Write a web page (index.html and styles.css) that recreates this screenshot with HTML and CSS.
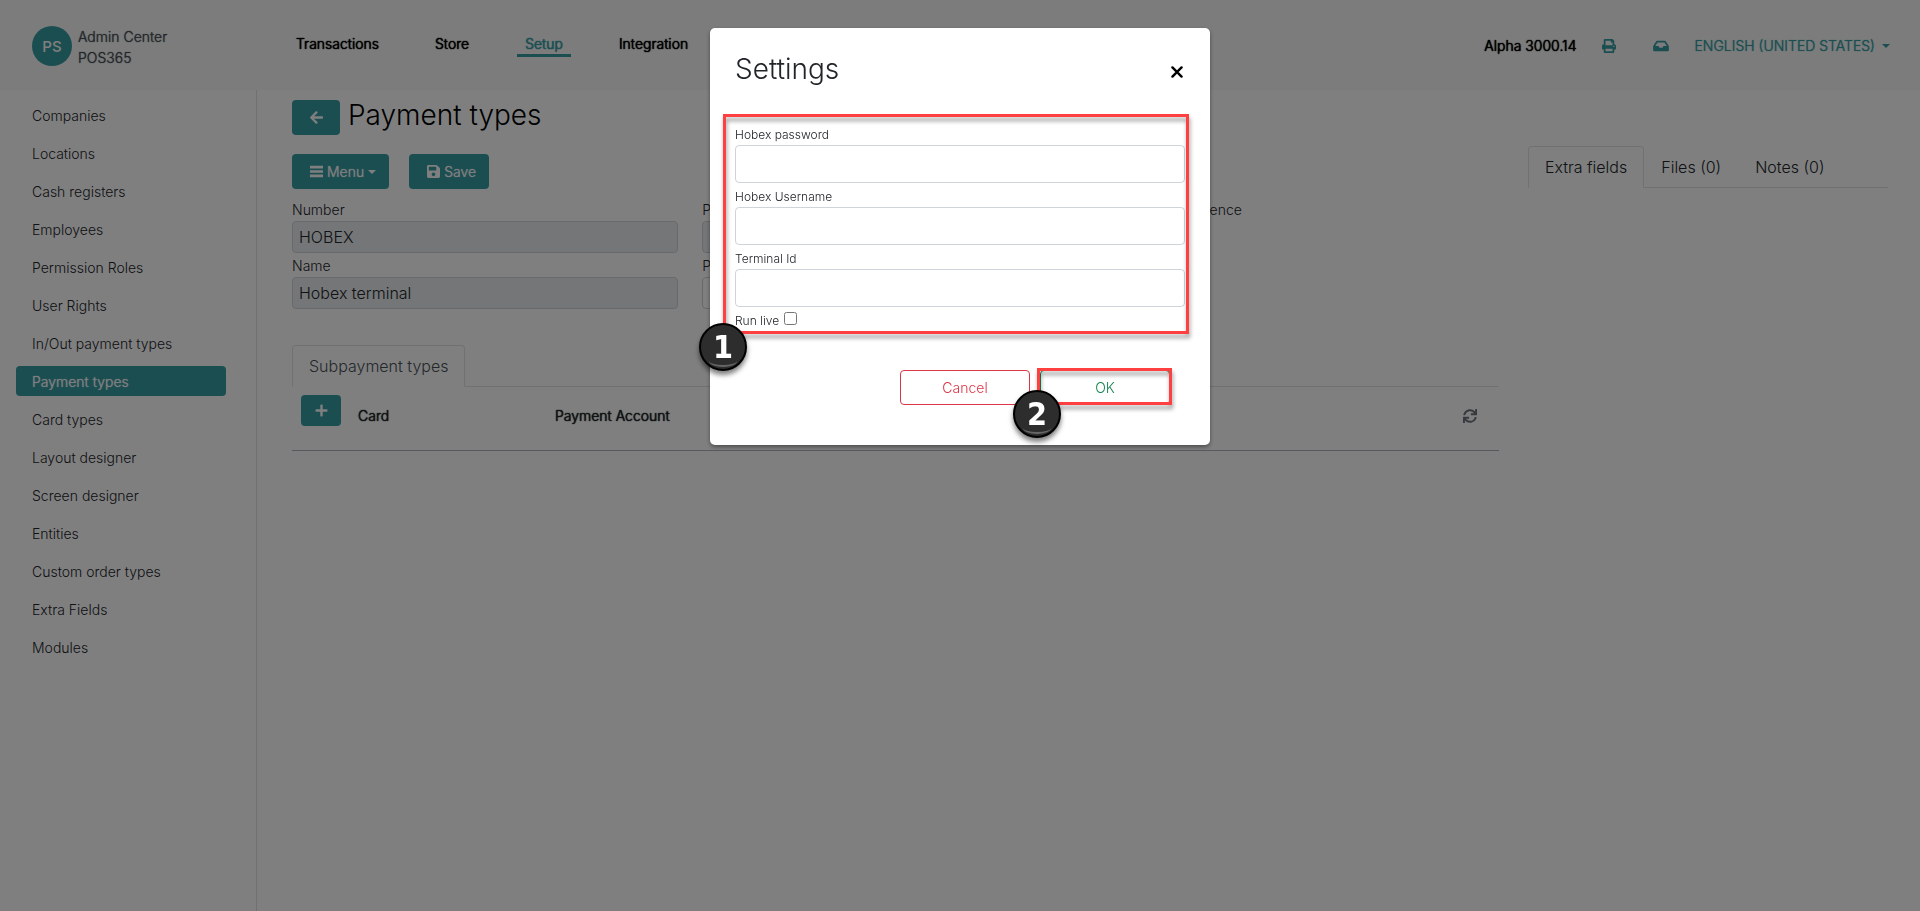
FILE: index.html
```html
<!DOCTYPE html>
<html lang="en">
<head>
<meta charset="utf-8">
<title>Payment types</title>
<link rel="stylesheet" href="styles.css">
</head>
<body>
<div class="app">
  <header class="topbar">
    <a class="brand" href="#">
      <span class="brand-logo">PS</span>
      <span class="brand-name">Admin Center<br>POS365</span>
    </a>
    <nav class="mainnav">
      <a href="#">Transactions</a>
      <a href="#">Store</a>
      <a href="#" class="current">Setup</a>
      <a href="#">Integration</a>
    </nav>
    <div class="tools">
      <span class="company">Alpha 3000.14</span>
      <button class="tool" type="button" aria-label="Print">
        <svg width="14" height="14" viewBox="0 0 512 512"><path d="M448 192V77.250c0-8.500-3.400-16.600-9.400-22.600L393.400 9.400c-6-6-14.100-9.400-22.600-9.400H96C78.300 0 64 14.300 64 32v160c-35.300 0-64 28.700-64 64v112c0 8.800 7.200 16 16 16h48v96c0 17.700 14.300 32 32 32h320c17.700 0 32-14.300 32-32v-96h48c8.800 0 16-7.200 16-16V256c0-35.300-28.700-64-64-64zm-64 256H128v-96h256v96zm0-224H128V64h192v48c0 8.800 7.200 16 16 16h48v96zm48 72c-13.300 0-24-10.700-24-24s10.700-24 24-24 24 10.700 24 24-10.700 24-24 24z"/></svg>
      </button>
      <button class="tool" type="button" aria-label="Inbox">
        <svg width="16" height="14" viewBox="0 0 576 512"><path d="M567.900 243.900L462.300 85.400A48 48 0 0 0 422.400 64H153.600a48 48 0 0 0-39.900 21.400L8.100 243.900A48 48 0 0 0 0 270.500V400c0 26.500 21.500 48 48 48h480c26.500 0 48-21.500 48-48V270.500a48 48 0 0 0-8.100-26.600zM162.300 128h251.500l85.300 128H376l-32 64H232l-32-64H76.900l85.400-128z"/></svg>
      </button>
      <button class="language caret" type="button">ENGLISH (UNITED STATES)</button>
    </div>
  </header>

  <div class="body">
    <nav class="sidebar">
      <a href="#">Companies</a>
      <a href="#">Locations</a>
      <a href="#">Cash registers</a>
      <a href="#">Employees</a>
      <a href="#">Permission Roles</a>
      <a href="#">User Rights</a>
      <a href="#">In/Out payment types</a>
      <a href="#" class="current">Payment types</a>
      <a href="#">Card types</a>
      <a href="#">Layout designer</a>
      <a href="#">Screen designer</a>
      <a href="#">Entities</a>
      <a href="#">Custom order types</a>
      <a href="#">Extra Fields</a>
      <a href="#">Modules</a>
    </nav>

    <main class="content">
      <section class="details">
        <div class="heading">
          <button class="btn btn-back" type="button" aria-label="Back">
            <svg width="13" height="15" viewBox="0 0 448 512"><path d="M257.500 445.100l-22.200 22.200c-9.400 9.400-24.600 9.400-33.900 0L7 273c-9.400-9.400-9.400-24.600 0-33.900L201.400 44.700c9.400-9.400 24.600-9.400 33.900 0l22.200 22.200c9.500 9.500 9.300 25-.4 34.300L136.600 216H424c13.300 0 24 10.700 24 24v32c0 13.300-10.700 24-24 24H136.600l120.500 114.800c9.800 9.300 10 24.800.4 34.300z"/></svg>
          </button>
          <h1>Payment types</h1>
        </div>
        <div class="actions">
          <button class="btn caret" type="button">
            <svg width="13" height="13" viewBox="0 0 13 13"><path d="M0 .8h13v2.600H0zM0 5.200h13v2.600H0zM0 9.600h13v2.600H0z"/></svg>
            Menu</button>
          <button class="btn" type="button">
            <svg width="13" height="15" viewBox="0 0 448 512"><path d="M433.900 129.900l-83.800-83.800A48 48 0 0 0 316.100 32H48C21.500 32 0 53.500 0 80v352c0 26.500 21.500 48 48 48h352c26.500 0 48-21.500 48-48V163.900a48 48 0 0 0-14.100-34zM224 416c-35.300 0-64-28.700-64-64s28.700-64 64-64 64 28.700 64 64-28.700 64-64 64zm96-304.500V212c0 6.600-5.400 12-12 12H76c-6.600 0-12-5.400-12-12V108c0-6.600 5.400-12 12-12h228.500c3.200 0 6.200 1.300 8.500 3.500l3.500 3.500A12 12 0 0 1 320 111.500z"/></svg>
            Save</button>
        </div>
        <div class="fields">
          <div class="field">
            <label for="number">Number</label>
            <input id="number" value="HOBEX" readonly>
          </div>
          <div class="field">
            <label for="type">Payment kind</label>
            <input id="type" value="Terminal" readonly>
          </div>
          <div class="check">
            <input id="reference" type="checkbox">
            <label for="reference">Require reference</label>
          </div>
          <div class="field">
            <label for="name">Name</label>
            <input id="name" value="Hobex terminal" readonly>
          </div>
          <div class="field">
            <label for="pin">PIN</label>
            <input id="pin">
          </div>
        </div>
        <div class="tabs tabs-sub">
          <button class="tab active" type="button">Subpayment types</button>
        </div>
        <table class="grid">
          <thead>
            <tr>
              <th class="col-add"><button class="btn btn-add" type="button" aria-label="Add">
                <svg width="13" height="13" viewBox="0 0 13 13"><path d="M5.300 1.200q0-.7.700-.7h1q.7 0 .7.700v4.100h4.100q.7 0 .7.700v1q0 .7-.7.700H7.700v4.100q0 .7-.7.700H6q-.7 0-.7-.7V7.700H1.200q-.7 0-.7-.7V6q0-.7.700-.7h4.100z"/></svg>
              </button></th>
              <th class="col-card">Card</th>
              <th>Payment Account</th>
              <th class="col-refresh"><button class="refresh" type="button" aria-label="Refresh">
                <svg width="14" height="14" viewBox="0 0 512 512"><path d="M440.600 12.600l4 82.800A247.200 247.200 0 0 0 255.800 8C134.700 8 33.900 94.900 12.300 209.800A12 12 0 0 0 24.100 224h49a12 12 0 0 0 11.700-9.300 175.900 175.900 0 0 1 317-56.900l-101.500-4.900a12 12 0 0 0-12.600 12v47.400a12 12 0 0 0 12 12H500a12 12 0 0 0 12-12V12a12 12 0 0 0-12-12h-47.400a12 12 0 0 0-12 12.600zM255.800 432a175.600 175.600 0 0 1-146-77.800l101.800 4.900a12 12 0 0 0 12.600-12v-47.400a12 12 0 0 0-12-12H12a12 12 0 0 0-12 12V500a12 12 0 0 0 12 12h47.400a12 12 0 0 0 12-12.600l-4.200-82.600A247.200 247.200 0 0 0 255.800 504c121.100 0 221.900-86.900 243.500-201.800a12 12 0 0 0-11.800-14.200h-49a12 12 0 0 0-11.700 9.300A175.900 175.900 0 0 1 255.800 432z"/></svg>
              </button></th>
            </tr>
          </thead>
        </table>
      </section>

      <aside class="extras">
        <div class="tabs">
          <button class="tab active" type="button">Extra fields</button>
          <button class="tab" type="button">Files (0)</button>
          <button class="tab" type="button">Notes (0)</button>
        </div>
      </aside>
    </main>
  </div>
</div>

<div class="backdrop">
  <div class="modal" role="dialog" aria-labelledby="modal-title">
    <div class="modal-head">
      <h2 id="modal-title">Settings</h2>
      <button class="close" type="button" aria-label="Close">
        <svg width="12" height="12" viewBox="0 0 10 10"><path d="M1.200 1.200l7.600 7.600M8.800 1.200l-7.600 7.600"/></svg>
      </button>
    </div>
    <form class="modal-form">
      <label for="password">Hobex password</label>
      <input id="password" type="text">
      <label for="username">Hobex Username</label>
      <input id="username" type="text">
      <label for="terminal">Terminal Id</label>
      <input id="terminal" type="text">
      <div class="live">
        <label for="live">Run live</label>
        <input id="live" type="checkbox">
      </div>
      <span class="mark mark-form"></span>
      <span class="step step-form">1</span>
    </form>
    <div class="modal-foot">
      <button class="outline cancel" type="button">Cancel</button>
      <div class="confirm">
        <button class="outline ok" type="button">OK</button>
        <span class="mark mark-ok"></span>
        <span class="step step-ok">2</span>
      </div>
    </div>
  </div>
</div>
</body>
</html>
```

FILE: styles.css
```css
* {
  box-sizing: border-box;
}

body {
  margin: 0;
  background: #fff;
  color: #212529;
  font: 300 14px/21px Inter, "Liberation Sans", sans-serif;
}

a {
  color: inherit;
  text-decoration: none;
}

button,
input {
  font: inherit;
  color: inherit;
}

button {
  border: 0;
  padding: 0;
  background: none;
}

svg {
  display: block;
  flex: none;
  fill: currentColor;
}

h1,
h2 {
  margin: 0;
  font-size: 28px;
  line-height: 34px;
  font-weight: 300;
}

.app {
  display: flex;
  flex-direction: column;
  min-height: 100vh;
}

/* Top bar */
.topbar {
  display: flex;
  align-items: center;
  height: 90px;
  padding: 2px 30px 0 32px;
  background: #f8f8f8;
}

.brand {
  display: flex;
  align-items: center;
  gap: 6px;
  width: 256px;
  color: #495057;
}

.brand-name {
  padding-top: 2px;
  text-shadow: 0 0 1px currentColor;
}

.brand-logo {
  display: grid;
  place-items: center;
  width: 40px;
  height: 40px;
  border-radius: 50%;
  background: #369ca3;
  color: #fff;
  font-size: 15px;
  font-weight: 500;
}

.mainnav {
  display: flex;
  gap: 40px;
  margin-bottom: 2px;
  color: #000;
}

.mainnav,
.company,
.grid {
  text-shadow: 0 0 1px currentColor, 0 0 1px currentColor;
}

.mainnav a {
  padding: 0 8px;
  border-bottom: 3px solid transparent;
}

.mainnav .current {
  color: #369ca3;
  border-color: #369ca3;
}

.tools {
  display: flex;
  align-items: center;
  margin-bottom: 1px;
  margin-left: auto;
  color: #369ca3;
}

.company {
  color: #000;
}

.tool {
  margin-left: 26px;
}

.tool + .tool {
  margin-left: 37px;
}

.language {
  margin-left: 25px;
  text-shadow: 0 0 1px currentColor;
}

.caret {
  display: flex;
  align-items: center;
}

.caret::after {
  content: "";
  border: 4px solid transparent;
  border-top-color: currentColor;
  border-bottom: 0;
}

.language::after {
  margin-left: 7px;
}

/* Sidebar */
.body {
  display: flex;
  flex: 1;
}

.sidebar {
  display: flex;
  flex-direction: column;
  gap: 8px;
  width: 257px;
  padding: 10px 30px 0 16px;
  border-right: 1px solid #dee2e6;
}

.sidebar a {
  padding: 5px 16px 4px;
  border-radius: 4px;
}

.sidebar .current {
  background: #369ca3;
  color: #fff;
  text-shadow: 0 0 1px currentColor;
}

/* Content */
.content {
  display: flex;
  flex: 1;
  gap: 29px;
  padding: 10px 32px 0 35px;
}

.details {
  flex: 1;
}

.extras {
  width: 360px;
  padding-top: 46px;
}

.heading {
  display: flex;
  gap: 8px;
}

h1 {
  line-height: 30px;
  color: #000;
}

.actions {
  display: flex;
  gap: 20px;
  margin: 19px 0 10px;
}

.btn {
  display: flex;
  align-items: center;
  justify-content: center;
  gap: 4px;
  height: 35px;
  padding: 0 13px 0 18px;
  border-radius: 4px;
  background: #369ca3;
  color: #fff;
  text-shadow: 0 0 1px currentColor;
}

.btn-back {
  width: 48px;
  padding: 0;
}

.fields {
  display: grid;
  grid-template-columns: repeat(3, 1fr);
  gap: 2px 24px;
}

.field {
  display: flex;
  flex-direction: column;
}

.field input {
  width: 100%;
  height: 32px;
  margin-top: 1px;
  padding: 0 6px;
  border: 1px solid #ced4da;
  border-radius: 4px;
  background: #fff;
  font-size: 16px;
}

.field input:read-only {
  background: #e9ecef;
}

.check {
  display: flex;
  align-items: flex-start;
}

.check input {
  width: 13px;
  height: 13px;
  margin: 4px 0 0;
}

/* Tabs */
.tabs {
  display: flex;
  border-bottom: 1px solid #dee2e6;
}

.tabs-sub {
  margin-top: 36px;
}

.tab {
  height: 42px;
  margin-bottom: -1px;
  padding: 0 16px;
  border: 1px solid transparent;
  border-radius: 4px 4px 0 0;
  font-size: 16px;
}

.tab.active {
  border-color: #dee2e6;
  border-bottom-color: #fff;
  background: #fff;
}

.tabs-sub .tab {
  color: #495057;
}

/* Subpayment table */
.grid {
  width: 100%;
  border-collapse: collapse;
  border-bottom: 1px solid #adb5bd;
  text-align: left;
}

.grid th {
  height: 63px;
  padding: 0 0 5px;
  vertical-align: middle;
  font-weight: 300;
}

.grid .col-add {
  width: 66px;
  padding: 0 0 16px 9px;
}

.grid .col-card {
  width: 197px;
}

.grid .col-refresh {
  width: 36px;
}

.btn-add {
  width: 40px;
  height: 31px;
  padding: 0;
}

.refresh {
  display: block;
  color: #6c757d;
}

/* Modal */
.backdrop {
  position: fixed;
  inset: 0;
  display: flex;
  align-items: flex-start;
  justify-content: center;
  padding-top: 28px;
  background: rgba(0, 0, 0, 0.5);
}

.modal {
  width: 500px;
  padding: 24px 25px 40px;
  border-radius: 5px;
  background: #fff;
  box-shadow: 0 2px 4px rgba(0, 0, 0, 0.4);
}

.modal-head {
  display: flex;
  align-items: center;
  justify-content: space-between;
  padding-right: 2px;
}

.close svg {
  margin-top: 6px;
  fill: none;
  stroke: #000;
  stroke-width: 2px;
  stroke-linecap: round;
}

.modal-form {
  position: relative;
  display: flex;
  flex-direction: column;
  margin-top: 39px;
  font-size: 12px;
  line-height: 20px;
}

.modal-form > label {
  height: 20px;
}

.modal-form > label + input {
  height: 38px;
  margin-bottom: 4px;
  padding: 0 12px;
  border: 1px solid #ced4da;
  border-radius: 4px;
}

.live {
  display: flex;
  gap: 5px;
}

.live input {
  width: 13px;
  height: 13px;
  margin: 1px 0 0;
}

.modal-foot {
  display: flex;
  justify-content: flex-end;
  gap: 10px;
  margin-top: 39px;
  padding-right: 15px;
}

.outline {
  display: block;
  width: 130px;
  height: 35px;
  border: 1px solid currentColor;
  border-radius: 4px;
}

.cancel {
  color: #dc3545;
}

.ok {
  color: #198754;
}

.confirm {
  position: relative;
}

/* Numbered callouts */
.mark {
  position: absolute;
  border: 3px solid #ff4040;
  pointer-events: none;
  filter: drop-shadow(1px 4px 2px rgba(0, 0, 0, 0.4));
}

.mark-form {
  inset: -11px -4px -3px -12px;
}

.mark-ok {
  inset: -2px -2px 0 -3px;
}

.step {
  position: absolute;
  display: grid;
  place-items: center;
  width: 48px;
  height: 48px;
  border: 2px solid #000;
  border-radius: 50%;
  background: #2d2d2d;
  box-shadow: 0 4px 5px rgba(0, 0, 0, 0.5);
  color: #fff;
  font: 700 32px/44px "DejaVu Sans Condensed", "DejaVu Sans", sans-serif;
}

.step::after {
  content: "";
  position: absolute;
  inset: 30px 8px 2px;
  border-bottom: 2px solid #666;
  border-radius: 50%;
}

.step-form {
  left: -36px;
  bottom: -40px;
}

.step-ok {
  left: -27px;
  top: 20px;
}
```
